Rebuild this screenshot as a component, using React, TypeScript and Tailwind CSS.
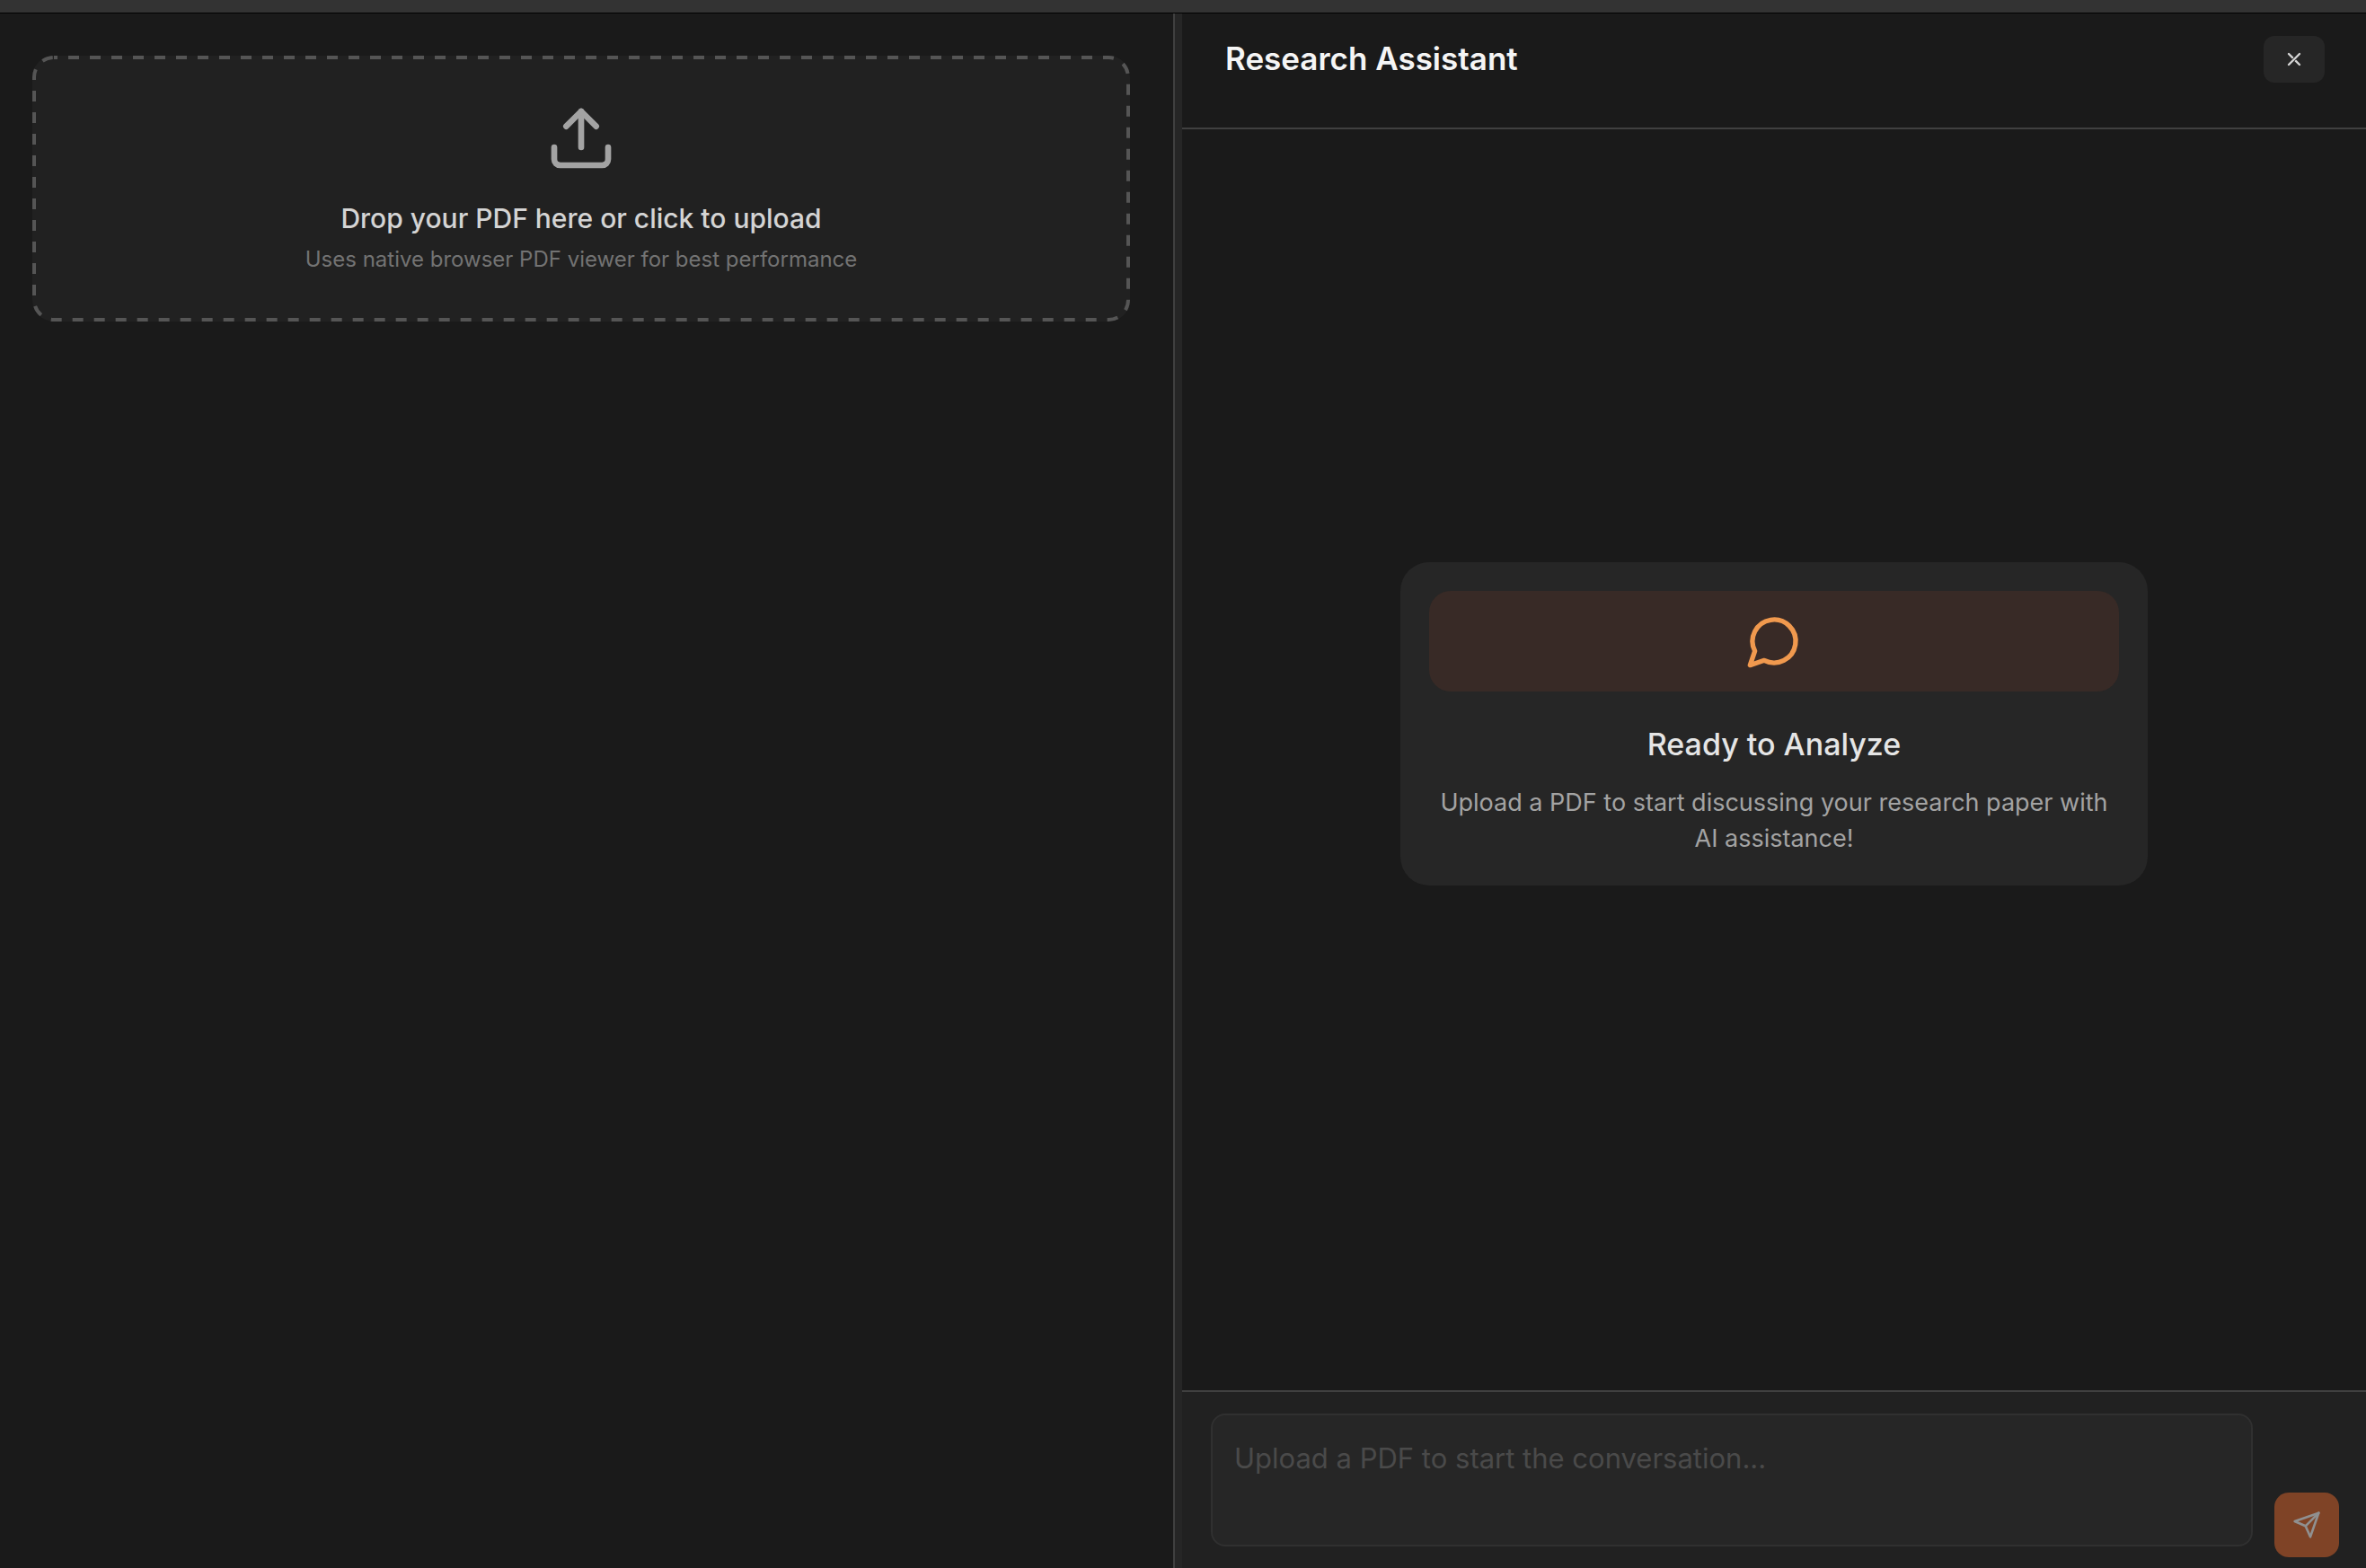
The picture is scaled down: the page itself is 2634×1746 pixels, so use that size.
import { useState } from "react";
import { Upload } from "lucide-react";

function CloseIcon() {
  return (
    <svg
      viewBox="0 0 24 24"
      fill="none"
      stroke="currentColor"
      strokeWidth="2.4"
      strokeLinecap="round"
      className="size-6"
      aria-hidden="true"
    >
      <path d="m6 6 4.4 4.4" />
      <path d="m13.6 13.6 4.4 4.4" />
      <path d="M18 6 6 18" stroke="#262626" strokeWidth="3.6" strokeLinecap="butt" />
      <path d="M18 6 6 18" />
    </svg>
  );
}

function MessageCircleIcon() {
  return (
    <svg
      viewBox="0 0 24 24"
      fill="none"
      stroke="currentColor"
      strokeWidth="2"
      strokeLinecap="round"
      strokeLinejoin="round"
      className="size-16"
      aria-hidden="true"
    >
      <path d="M7.9 20A9 9 0 1 0 4 16.1L2 22Z" />
    </svg>
  );
}

function SendIcon() {
  return (
    <svg
      viewBox="0 0 24 24"
      fill="none"
      stroke="currentColor"
      strokeWidth="2"
      strokeLinecap="round"
      strokeLinejoin="round"
      className="size-8"
      aria-hidden="true"
    >
      <path d="m22 2-7 20-4-9-9-4Z" />
      <path d="M22 2 11 13" />
    </svg>
  );
}

// Even 12px dashes, which border-dashed cannot give at this thickness
function DashedOutline() {
  return (
    <svg
      className="pointer-events-none absolute inset-0 size-full p-0.5 text-[#555555]"
      overflow="visible"
      aria-hidden="true"
    >
      <rect
        width="100%"
        height="100%"
        rx="22"
        fill="none"
        stroke="currentColor"
        strokeWidth="4"
        strokeDasharray="12 12"
        strokeDashoffset="8"
      />
    </svg>
  );
}

function PdfPanel() {
  return (
    <section className="w-[calc(50%-11px)] shrink-0 pt-[47px] pr-12 pl-9">
      <button
        type="button"
        className="relative flex w-full cursor-pointer flex-col items-center rounded-3xl bg-[#212121] p-13"
      >
        <DashedOutline />
        <Upload className="size-20 text-[#a3a3a3]" />
        <span className="mt-6 text-[30px] leading-[50px] font-medium text-[#d4d4d4]">
          Drop your PDF here or click to upload
        </span>
        <span className="mt-1 text-[24px] leading-[34px] text-[#737373]">
          Uses native browser PDF viewer for best performance
        </span>
      </button>
    </section>
  );
}

function EmptyState() {
  return (
    <div className="mb-20 w-full max-w-[832px] rounded-4xl bg-[#262626] p-8 text-center">
      <div className="flex justify-center rounded-3xl bg-[#382a26] p-6 text-[#f0994e]">
        <MessageCircleIcon />
      </div>
      <h3 className="mt-8 text-[34px] leading-[54px] font-medium text-[#e5e5e5]">
        Ready to Analyze
      </h3>
      <p className="mt-[18px] text-[27px] leading-10 text-[#a3a3a3]">
        Upload a PDF to start discussing your research paper with AI assistance!
      </p>
    </div>
  );
}

function ChatPanel() {
  const [message, setMessage] = useState("");

  return (
    <section className="flex min-w-0 flex-1 flex-col">
      <header className="flex items-start justify-between border-b-2 border-[#404040] pt-[25px] pr-[46px] pb-[50px] pl-12">
        <h2 className="text-[35px] leading-[50px] font-semibold text-[#f5f5f5]">
          Research Assistant
        </h2>
        <button
          type="button"
          aria-label="Close assistant"
          className="flex h-[52px] w-[68px] items-center justify-center rounded-xl bg-[#262626] text-[#d4d4d4]"
        >
          <CloseIcon />
        </button>
      </header>

      <div className="flex flex-1 items-center justify-center">
        <EmptyState />
      </div>

      <form
        className="flex items-end gap-6 border-t-2 border-[#404040] bg-[#212121] pt-6 pr-[30px] pb-3 pl-8"
        onSubmit={(event) => event.preventDefault()}
      >
        <div className="flex-1 pb-3">
          <textarea
            aria-label="Message"
            value={message}
            onChange={(event) => setMessage(event.target.value)}
            placeholder="Upload a PDF to start the conversation..."
            className="block h-[148px] w-full resize-none rounded-2xl border-2 border-[#303030] bg-[#262626] px-6 py-6 text-[31px] leading-12 text-[#d4d4d4] outline-none placeholder:text-[#4a4a4a]"
          />
        </div>
        <button
          type="submit"
          aria-label="Send message"
          className="flex size-18 items-center justify-center rounded-2xl bg-[#7f4326] text-[#909090]"
        >
          <SendIcon />
        </button>
      </form>
    </section>
  );
}

export default function App() {
  return (
    <div className="flex min-h-screen flex-col bg-[#1a1a1a] font-['Inter',sans-serif]">
      <div className="h-[15px] border-b border-black bg-[#333333]" />
      <main className="flex flex-1">
        <PdfPanel />
        <div
          role="separator"
          aria-orientation="vertical"
          className="w-2.5 shrink-0 cursor-col-resize border-l-2 border-[#404040] bg-[#262626]"
        />
        <ChatPanel />
      </main>
    </div>
  );
}
